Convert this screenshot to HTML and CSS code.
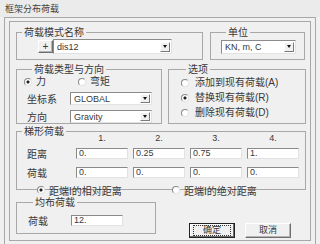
FILE: index.html
```html
<!DOCTYPE html>
<html lang="zh">

<head>
    <meta charset="UTF-8">
    <meta name="viewport" content="width=device-width, initial-scale=1.0">
    <title>框架分布荷载</title>
    <link rel="stylesheet" href="styles.css">
</head>

<body>
    <div class="titlebar">框架分布荷载</div>

    <div class="window">
        <div class="client">

            <div class="row">
                <div class="group g-name">
                    <div class="group-title">荷载模式名称</div>
                    <div class="name-line">
                        <div class="btn btn-plus">+</div>
                        <div class="combo c-name"><span>dis12</span><div class="arrow"></div></div>
                    </div>
                </div>
                <div class="group g-unit">
                    <div class="group-title">单位</div>
                    <div class="combo c-unit"><span>KN, m, C</span><div class="arrow"></div></div>
                </div>
            </div>

            <div class="row row-mid">
                <div class="group g-type">
                    <div class="group-title">荷载类型与方向</div>
                    <div class="radio-line">
                        <label class="opt opt-force"><span class="radio on"></span>力</label>
                        <label class="opt"><span class="radio"></span>弯矩</label>
                    </div>
                    <div class="form-line first">
                        <span class="form-label">坐标系</span>
                        <div class="combo c-dir"><span>GLOBAL</span><div class="arrow"></div></div>
                    </div>
                    <div class="form-line">
                        <span class="form-label">方向</span>
                        <div class="combo c-dir"><span>Gravity</span><div class="arrow"></div></div>
                    </div>
                </div>
                <div class="group g-opt">
                    <div class="group-title">选项</div>
                    <ul class="opt-list">
                        <li><span class="radio"></span>添加到现有荷载(A)</li>
                        <li><span class="radio on"></span>替换现有荷载(R)</li>
                        <li><span class="radio"></span>删除现有荷载(D)</li>
                    </ul>
                </div>
            </div>

            <div class="group g-trap">
                <div class="group-title">梯形荷载</div>
                <div class="trap-grid">
                    <span></span>
                    <span class="col-head">1.</span>
                    <span class="col-head">2.</span>
                    <span class="col-head">3.</span>
                    <span class="col-head">4.</span>

                    <span class="form-label">距离</span>
                    <div class="field">0.</div>
                    <div class="field">0.25</div>
                    <div class="field">0.75</div>
                    <div class="field">1.</div>

                    <span class="form-label">荷载</span>
                    <div class="field">0.</div>
                    <div class="field">0.</div>
                    <div class="field">0.</div>
                    <div class="field">0.</div>
                </div>
                <div class="dist-line">
                    <label class="opt opt-rel"><span class="radio on"></span>距端I的相对距离</label>
                    <label class="opt"><span class="radio"></span>距端I的绝对距离</label>
                </div>
            </div>

            <div class="row row-bottom">
                <div class="group g-uni">
                    <div class="group-title">均布荷载</div>
                    <div class="form-line uni-line">
                        <span class="form-label">荷载</span>
                        <div class="field">12.</div>
                    </div>
                </div>
                <div class="buttons">
                    <div class="btn btn-default"><span class="focus">确定</span></div>
                    <div class="btn">取消</div>
                </div>
            </div>

        </div>
    </div>
</body>

</html>
```

FILE: styles.css
```css
body {
    margin: 0;
    width: 320px;
    height: 244px;
    overflow: hidden;
    background-color: #f0f0f0;
    color: #383838;
    font-family: "Liberation Sans", "Noto Sans CJK SC", sans-serif;
    font-size: 10px;
}

.titlebar {
    height: 17px;
    line-height: 19px;
    padding-left: 5px;
    font-size: 9px;
    background-color: #ebebeb;
    color: #444;
}

.window {
    box-sizing: border-box;
    width: 312px;
    height: 227px;
    margin-left: 4px;
    padding: 3px 4px;
    border: 1px solid #a8a8a8;
    border-bottom: none;
}

.client {
    box-sizing: border-box;
    width: 302px;
    height: 220px;
    padding: 10px 0 0 6px;
    border: 1px solid #a8a8a8;
}

.row {
    display: flex;
    align-items: flex-start;
}

/* group boxes */
.group {
    box-sizing: border-box;
    border: 1px solid #a8a8a8;
}

.group-title {
    display: table;
    margin: -7px 0 0 5px;
    padding: 0 2px;
    line-height: 13px;
    background-color: #f0f0f0;
}

.g-name {
    width: 187px;
    height: 28px;
}

.g-unit {
    width: 95px;
    height: 28px;
    margin-left: 7px;
    padding-left: 10px;
}

.g-unit .combo {
    margin-top: 1px;
}

.row-mid {
    margin-top: 9px;
}

.g-type {
    width: 146px;
    height: 55px;
    padding-left: 10px;
}

.g-opt {
    width: 138px;
    height: 55px;
    margin-left: 6px;
    padding-left: 12px;
}

.g-trap {
    width: 290px;
    height: 59px;
    margin-top: 7px;
}

.row-bottom {
    margin-top: 12px;
}

.g-uni {
    width: 140px;
    height: 32px;
    padding-left: 11px;
}

/* controls */
.name-line {
    display: flex;
    align-items: flex-start;
    padding-left: 21px;
}

.btn {
    box-sizing: border-box;
    display: flex;
    align-items: center;
    justify-content: center;
    background-color: #f0f0f0;
    border: 1px solid;
    border-color: #fff #6e6e6e #6e6e6e #fff;
    box-shadow: inset -1px -1px 0 #b4b4b4;
}

.btn-plus {
    width: 15px;
    height: 13px;
    margin-top: 1px;
    font-size: 10px;
    line-height: 11px;
}

.combo {
    box-sizing: border-box;
    display: flex;
    align-items: center;
    justify-content: space-between;
    height: 14px;
    padding: 0 1px 0 3px;
    background-color: #fff;
    border: 1px solid;
    border-color: #8a8a8a #e2e2e2 #e2e2e2 #8a8a8a;
    font-size: 9px;
}

.c-name {
    width: 119px;
    height: 15px;
}

.c-unit {
    width: 75px;
}

.c-dir {
    width: 82px;
    height: 13px;
}

.arrow {
    box-sizing: border-box;
    position: relative;
    width: 10px;
    height: 10px;
    background-color: #f0f0f0;
    border: 1px solid;
    border-color: #fff #7a7a7a #7a7a7a #fff;
}

.c-dir .arrow {
    height: 9px;
}

.arrow::after {
    content: "";
    position: absolute;
    left: 2px;
    top: 2px;
    border-left: 2px solid transparent;
    border-right: 2px solid transparent;
    border-top: 3px solid #111;
}

.radio {
    box-sizing: border-box;
    display: inline-block;
    width: 8px;
    height: 8px;
    border-radius: 50%;
    border: 1px solid;
    border-color: #8a8a8a #e4e4e4 #e4e4e4 #8a8a8a;
    background-color: #fff;
}

.radio.on {
    background: radial-gradient(circle, #222 0 1.3px, #fff 1.8px);
}

.opt {
    display: flex;
    align-items: center;
    gap: 4px;
}

.radio-line {
    display: flex;
    height: 10px;
    line-height: 10px;
    margin-top: 1px;
    margin-left: -3px;
}

.opt-force {
    width: 54px;
}

.form-line {
    display: flex;
    align-items: center;
    margin-top: 3px;
}

.form-line.first {
    margin-top: 4px;
}

.form-label {
    width: 43px;
}

.opt-list {
    list-style: none;
    margin: -1px 0 0;
    padding: 0;
}

.opt-list li {
    display: flex;
    align-items: center;
    gap: 6px;
    line-height: 15px;
}

.trap-grid {
    display: grid;
    grid-template-columns: 44px repeat(4, 52px);
    column-gap: 5px;
    row-gap: 4px;
    align-items: center;
    margin-top: -5px;
    padding-left: 10px;
}

.col-head {
    height: 10px;
    margin-bottom: -1px;
    line-height: 10px;
    text-align: center;
    font-size: 9px;
}

.field {
    box-sizing: border-box;
    height: 11px;
    padding-left: 2px;
    background-color: #fff;
    border: 1px solid;
    border-color: #8a8a8a #e2e2e2 #e2e2e2 #8a8a8a;
    font-size: 9px;
    line-height: 9px;
}

.dist-line {
    display: flex;
    height: 12px;
    margin-top: 4px;
    padding-left: 20px;
}

.opt-rel {
    width: 135px;
}

.uni-line {
    margin-top: 4px;
}

.uni-line .form-label {
    width: 43px;
}

.uni-line .field {
    width: 52px;
}

.buttons {
    display: flex;
    gap: 10px;
    margin: 21px 0 0 33px;
}

.buttons .btn {
    width: 46px;
    height: 15px;
    font-size: 9px;
    line-height: 9px;
}

.btn-default {
    border-color: #222;
    box-shadow: inset -1px -1px 0 #6e6e6e, inset 1px 1px 0 #fff;
}

.focus {
    box-sizing: border-box;
    display: flex;
    align-items: center;
    justify-content: center;
    width: 38px;
    height: 11px;
    border: 1px dotted #333;
}
```
